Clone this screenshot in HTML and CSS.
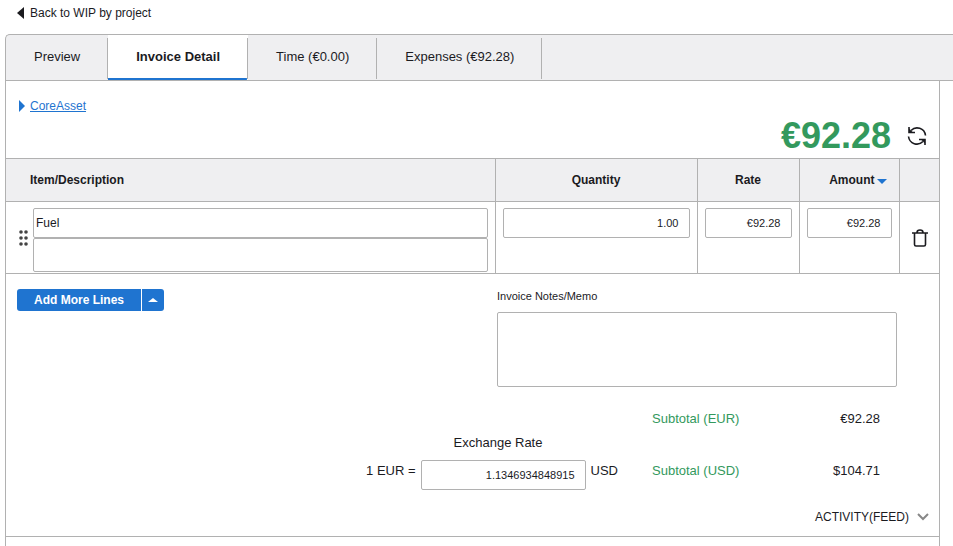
FILE: index.html
```html
<!DOCTYPE html>
<html lang="en">
<head>
<meta charset="utf-8">
<title>Invoice Detail</title>
<link rel="stylesheet" href="styles.css">
</head>
<body>
<a class="back" href="#"><svg width="7" height="12" viewBox="0 0 7 12"><path d="M7 0v12L0 6z" fill="currentColor"/></svg>Back to WIP by project</a>
<nav class="tabs">
  <a class="tab" href="#">Preview</a>
  <a class="tab active" href="#" aria-current="page">Invoice Detail</a>
  <a class="tab" href="#">Time (€0.00)</a>
  <a class="tab" href="#">Expenses (€92.28)</a>
</nav>
<main class="panel">
  <header class="summary">
    <div class="client"><svg width="6" height="12" viewBox="0 0 6 12"><path d="M0 0v12l6-6z" fill="currentColor"/></svg><a href="#">CoreAsset</a></div>
    <div class="total">
      <strong>€92.28</strong>
      <button class="icon-button" aria-label="Refresh">
        <svg width="20" height="20" viewBox="0 0 20 20" fill="none" stroke="currentColor" stroke-width="1.600"><path d="M4 4.500C9 -0.500 17.500 2 18.500 9.500M16 15.500C11 20.500 2.500 18 1.500 10.500M2 1v5.500h6M18 19v-5.500h-6"/><path d="M2 2.500v4h4zM18 17.500v-4h-4z" fill="currentColor" stroke="none"/></svg>
      </button>
    </div>
  </header>
  <table class="lines">
    <colgroup><col><col class="col-quantity"><col class="col-rate"><col class="col-amount"><col class="col-action"></colgroup>
    <thead>
      <tr>
        <th class="item-head">Item/Description</th>
        <th>Quantity</th>
        <th>Rate</th>
        <th class="amount-head">Amount<svg class="sort" width="10" height="5" viewBox="0 0 10 5"><path d="M0 0h10L5 5z" fill="currentColor"/></svg></th>
        <th></th>
      </tr>
    </thead>
    <tbody>
      <tr>
        <td>
          <div class="item">
            <svg class="grip" width="9" height="16" viewBox="0 0 9 16" fill="currentColor"><circle cx="2" cy="2" r="1.800"/><circle cx="7" cy="2" r="1.800"/><circle cx="2" cy="8" r="1.800"/><circle cx="7" cy="8" r="1.800"/><circle cx="2" cy="14" r="1.800"/><circle cx="7" cy="14" r="1.800"/></svg>
            <div class="item-fields">
              <input class="field" type="text" value="Fuel" aria-label="Item">
              <textarea class="field description" aria-label="Description"></textarea>
            </div>
          </div>
        </td>
        <td><input class="field number" type="text" value="1.00" aria-label="Quantity"></td>
        <td><input class="field number" type="text" value="€92.28" aria-label="Rate"></td>
        <td><input class="field number" type="text" value="€92.28" aria-label="Amount"></td>
        <td class="action">
          <button class="icon-button" aria-label="Delete line">
            <svg width="16" height="18" viewBox="0 0 16 18" fill="none" stroke="currentColor" stroke-width="1.600"><path d="M0 4h16M2.500 4v11.500q0 1.500 1.500 1.500h8q1.500 0 1.500-1.500V4M5 4V3.500q0-2.500 3-2.500t3 2.500v.5"/></svg>
          </button>
        </td>
      </tr>
    </tbody>
  </table>
  <section class="details">
    <div class="add">
      <button class="add-main">Add More Lines</button>
      <button class="add-more" aria-label="More line options"><svg width="10" height="4" viewBox="0 0 10 4"><path d="M0 4h10L5 0z" fill="currentColor"/></svg></button>
    </div>
    <div class="notes">
      <label for="memo">Invoice Notes/Memo</label>
      <textarea class="field memo" id="memo"></textarea>
    </div>
  </section>
  <section class="totals">
    <div class="exchange">
      <label class="exchange-label" for="rate">Exchange Rate</label>
      <span class="from">1 EUR =</span>
      <input class="field number" id="rate" type="text" value="1.1346934848915">
      <span class="to">USD</span>
    </div>
    <dl class="subtotals">
      <dt>Subtotal (EUR)</dt><dd>€92.28</dd>
      <dt>Subtotal (USD)</dt><dd>$104.71</dd>
    </dl>
  </section>
  <button class="activity">ACTIVITY(FEED)<svg width="12" height="8" viewBox="0 0 12 8" fill="none" stroke="#888" stroke-width="2"><path d="M1 1l5 5 5-5"/></svg></button>
  <div class="panel-end"></div>
</main>
</body>
</html>
```
FILE: styles.css
```css
* {
  box-sizing: border-box;
}

:root {
  --line: #b1b1b1;
  --shade: #efeff1;
  --blue: #1f74d0;
  --green: #33995d;
  --ink: #1b1b1f;
}

body {
  margin: 0;
  color: var(--ink);
  font: 13px/16px "Liberation Sans", Arial, sans-serif;
}

button, input, textarea {
  font: inherit;
  color: inherit;
}

button {
  padding: 0;
  border: 0;
  background: none;
}

svg {
  display: block;
}

.back {
  display: flex;
  align-items: center;
  gap: 6px;
  height: 34px;
  padding: 0 0 8px 17px;
  color: inherit;
  font-size: 12px;
  text-decoration: none;
}

.tabs {
  display: flex;
  height: 47px;
  margin-left: 5px;
  border: solid var(--line);
  border-width: 1px 0 1px 1px;
  border-radius: 5px 0 0 0;
  background: var(--shade);
}

.tab {
  display: flex;
  align-items: center;
  padding: 0 27px 2px 28px;
  border-right: 1px solid;
  border-image: linear-gradient(transparent 4px, var(--line) 4px, var(--line) 43px, transparent 43px) 1;
  color: inherit;
  text-decoration: none;
}

.tab.active {
  background: linear-gradient(var(--blue), var(--blue)) bottom / 100% 2px no-repeat #fff;
  font-weight: bold;
}

.panel {
  margin: 0 13px 0 5px;
  border: solid var(--line);
  border-width: 0 1px;
}

.summary {
  display: flex;
  justify-content: space-between;
  align-items: flex-start;
  height: 77px;
  padding: 17px 12px 0 13px;
}

.client {
  display: flex;
  align-items: center;
  gap: 5px;
  color: var(--blue);
  font-size: 12px;
}

.client a {
  color: inherit;
}

.total {
  display: flex;
  align-items: center;
  gap: 16px;
  padding-top: 17px;
}

.total strong {
  color: var(--green);
  font-size: 36px;
  line-height: 42px;
}

.lines {
  width: 100%;
  table-layout: fixed;
  border-collapse: collapse;
  font-size: 12px;
}

.col-quantity { width: 202px; }
.col-rate { width: 102px; }
.col-amount { width: 100px; }
.col-action { width: 40px; }

.lines th,
.lines td {
  border: 1px solid var(--line);
}

.lines th:first-child,
.lines td:first-child {
  border-left: 0;
}

.lines th:last-child,
.lines td:last-child {
  border-right: 0;
}

.lines th {
  height: 43px;
  padding: 0;
  background: var(--shade);
}

.lines .item-head {
  padding-left: 24px;
  text-align: left;
}

.lines .amount-head {
  padding-right: 12px;
  text-align: right;
}

.lines td {
  height: 72px;
  padding: 6px 7px 1px;
  vertical-align: top;
}

.lines .action {
  padding: 0 0 0 1px;
  vertical-align: middle;
}

.action .icon-button {
  margin: 0 auto;
}

.icon-button {
  display: block;
}

.sort {
  display: inline-block;
  margin-left: 2px;
  color: var(--blue);
}

.item {
  display: flex;
  align-items: center;
  gap: 5px;
  padding-left: 6px;
}

.grip {
  margin-bottom: 4px;
  color: #444;
}

.item-fields {
  flex: 1;
}

.field {
  display: block;
  width: 100%;
  height: 30px;
  padding: 0 2px;
  border: 1px solid var(--line);
  border-radius: 2px;
  background: #fff;
  resize: none;
}

.number {
  padding: 0 10px;
  font-size: 11px;
  text-align: right;
}

.description {
  height: 34px;
}

.details {
  display: flex;
  justify-content: space-between;
  padding: 14px 42px 0 11px;
}

.add {
  display: flex;
  gap: 1px;
  height: 22px;
  margin-top: 1px;
  color: #fff;
}

.add-main,
.add-more {
  background: var(--blue);
}

.add-main {
  width: 124px;
  border-radius: 3px 0 0 3px;
  font-size: 12px;
  font-weight: bold;
}

.add-more {
  display: grid;
  place-items: center;
  width: 22px;
  border-radius: 0 3px 3px 0;
}

.notes {
  width: 400px;
  font-size: 11px;
}

.notes label {
  display: block;
  margin-bottom: 8px;
}

.memo {
  height: 75px;
}

.totals {
  display: flex;
  justify-content: flex-end;
  gap: 34px;
  padding: 24px 59px 0 0;
}

.exchange {
  display: grid;
  grid-template-columns: auto 165px auto;
  grid-template-rows: 16px 30px;
  gap: 9px 5px;
  padding-top: 24px;
}

.exchange-label {
  grid-column: 1 / -1;
  justify-self: center;
  padding-left: 12px;
}

.from,
.to {
  padding-top: 3px;
}

.subtotals {
  display: grid;
  grid-template-columns: 1fr auto;
  grid-auto-rows: 16px;
  row-gap: 36px;
  width: 228px;
  margin: 0;
}

.subtotals dt {
  color: var(--green);
}

.subtotals dd {
  margin: 0;
  text-align: right;
}

.activity {
  display: flex;
  align-items: center;
  gap: 8px;
  margin: 19px 10px 11px auto;
  font-size: 12px;
}

.panel-end {
  height: 10px;
  border-top: 1px solid var(--line);
}
```
